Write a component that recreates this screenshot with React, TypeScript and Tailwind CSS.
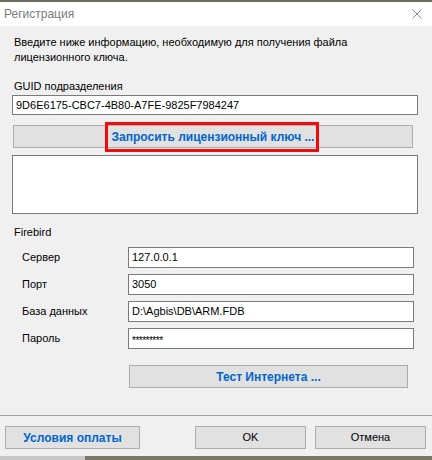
const font = { fontFamily: '"Liberation Sans", Arial, sans-serif' };

function Field({ label, value, mask }: { label: string; value: string; mask?: boolean }) {
  return (
    <div className="flex items-center h-[21px]">
      <div className="w-[128px] pl-[22px] text-[11px] text-black">{label}</div>
      <div className="w-[286px] h-[21px] bg-white border border-[#7a7a7a] flex items-center pl-[3px] text-[11px] text-black">
        {mask ? <span className="text-[10px] tracking-[-0.5px] pt-[3px]">{value}</span> : value}
      </div>
    </div>
  );
}

function Btn({ children, blue, w }: { children: React.ReactNode; blue?: boolean; w: string }) {
  return (
    <div
      className={`${w} h-[23px] bg-[#e1e1e1] border border-[#adadad] flex items-center justify-center ${
        blue ? "text-[12px] font-bold text-[#0066cc]" : "text-[11px] text-black"
      }`}
    >
      {children}
    </div>
  );
}

export default function App() {
  return (
    <div className="w-[432px] h-[460px] overflow-hidden bg-[#f0f0f0] flex flex-col" style={font}>
      <div className="h-[2px] bg-[#6e6a62]" />

      {/* title bar */}
      <div className="h-[24px] bg-white flex items-center justify-between pl-[4px] pr-[10px]">
        <span className="text-[12px] text-[#7b7b7b]">Регистрация</span>
        <svg width="10" height="10" viewBox="0 0 10 10">
          <path d="M0.5 0.5 L9.5 9.5 M9.5 0.5 L0.5 9.5" stroke="#8a8a8a" strokeWidth="1" />
        </svg>
      </div>

      <div className="flex flex-col pt-[9px]">
        <p className="ml-[14px] text-[11px] leading-[15px] text-black w-[340px]">
          Введите ниже информацию, необходимую для получения файла лицензионного ключа.
        </p>

        <div className="ml-[14px] mt-[14px] text-[11px] leading-[14px] text-black">GUID подразделения</div>
        <div className="ml-[12px] mt-[2px] w-[406px] h-[20px] bg-white border border-[#7a7a7a] flex items-center pl-[3px] text-[11px] text-black">
          9D6E6175-CBC7-4B80-A7FE-9825F7984247
        </div>

        <div className="ml-[13px] mt-[10px] relative">
          <Btn blue w="w-[400px]">Запросить лицензионный ключ ...</Btn>
          <div className="absolute left-[92px] top-[-3px] w-[214px] h-[30px] border-[3px] border-[#f00c0c]" />
        </div>

        <div className="ml-[12px] mt-[7px] w-[406px] h-[59px] bg-white border border-[#7a7a7a]" />

        <div className="ml-[14px] mt-[11px] text-[11px] leading-[14px] text-black">Firebird</div>

        <div className="flex flex-col gap-[6px] mt-[8px]">
          <Field label="Сервер" value="127.0.0.1" />
          <Field label="Порт" value="3050" />
          <Field label="База данных" value="D:\Agbis\DB\ARM.FDB" />
          <Field label="Пароль" value="*********" mask />
        </div>

        <div className="ml-[129px] mt-[16px]">
          <Btn blue w="w-[279px]">Тест Интернета ...</Btn>
        </div>

        <div className="mt-[27px] h-[1px] bg-[#a0a0a0]" />

        <div className="flex mt-[10px] pl-[5px]">
          <Btn blue w="w-[135px]">Условия оплаты</Btn>
          <div className="ml-[55px]">
            <Btn w="w-[111px]">OK</Btn>
          </div>
          <div className="ml-[9px]">
            <Btn w="w-[111px]">Отмена</Btn>
          </div>
        </div>
      </div>

      <div className="mt-auto h-[4px] flex">
        <div className="w-[85px] bg-[#c8c8c8]" />
        <div className="flex-1 bg-[#7c7868]" />
      </div>
    </div>
  );
}
